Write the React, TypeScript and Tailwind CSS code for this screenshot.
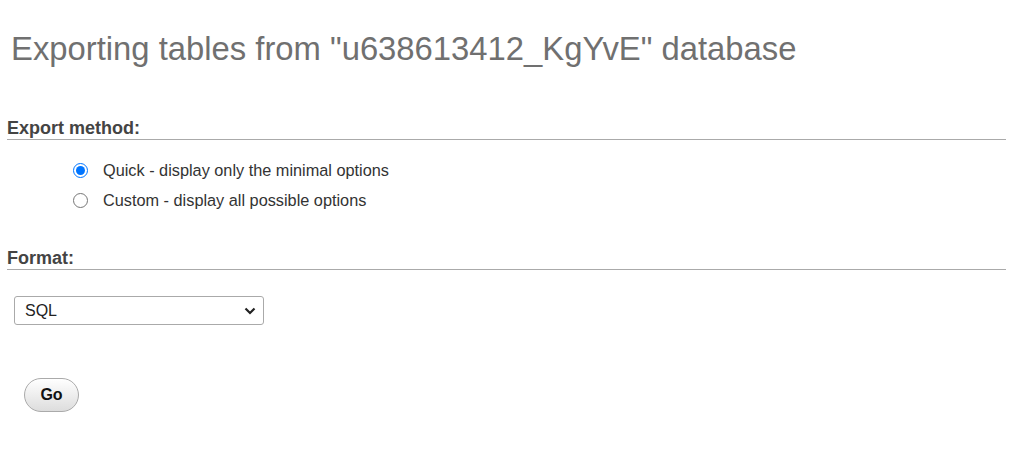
export default function App() {
  return (
    <div className="min-h-[450px] bg-white font-['Liberation_Sans',Arial,sans-serif] text-[#444]">
      <h2 className="pl-[11px] pt-[29px] text-[32.8px] leading-[40px] text-[#707070]">
        Exporting tables from "u638613412_KgYvE" database
      </h2>

      <div className="pl-[7px] pr-[8px] pt-[49px]">
        <h3 className="border-b border-[#aaa] text-[18px] font-bold leading-[21px] text-[#444]">
          Export method:
        </h3>
        <ul className="pl-[66px] pt-[15px] text-[16.3px] leading-[30px] text-[#333]">
          <li className="flex items-center">
            <input type="radio" name="method" defaultChecked className="mr-[15px] h-[15px] w-[15px] accent-[#0075ff]" />
            Quick - display only the minimal options
          </li>
          <li className="flex items-center">
            <input type="radio" name="method" className="mr-[15px] h-[15px] w-[15px]" />
            Custom - display all possible options
          </li>
        </ul>

        <h3 className="mt-[33px] border-b border-[#aaa] text-[18px] font-bold leading-[21px] text-[#444]">
          Format:
        </h3>
        <div className="pl-[7px] pt-[26px]">
          <div className="flex h-[29px] w-[250px] items-center justify-between rounded-[3px] border border-[#aaa] bg-white pl-[10px] pr-[7px] text-[16px] text-[#222]">
            <span>SQL</span>
            <svg width="12" height="8" viewBox="0 0 12 8" fill="none">
              <path d="M1.5 1.5 L6 6 L10.5 1.5" stroke="#222" strokeWidth="2.2" />
            </svg>
          </div>
        </div>

        <div className="pl-[17px] pt-[53px]">
          <button className="h-[34px] w-[55px] rounded-full border border-[#aaa] bg-gradient-to-b from-white to-[#ddd] text-[16px] font-bold text-[#111]">
            Go
          </button>
        </div>
      </div>
    </div>
  )
}
